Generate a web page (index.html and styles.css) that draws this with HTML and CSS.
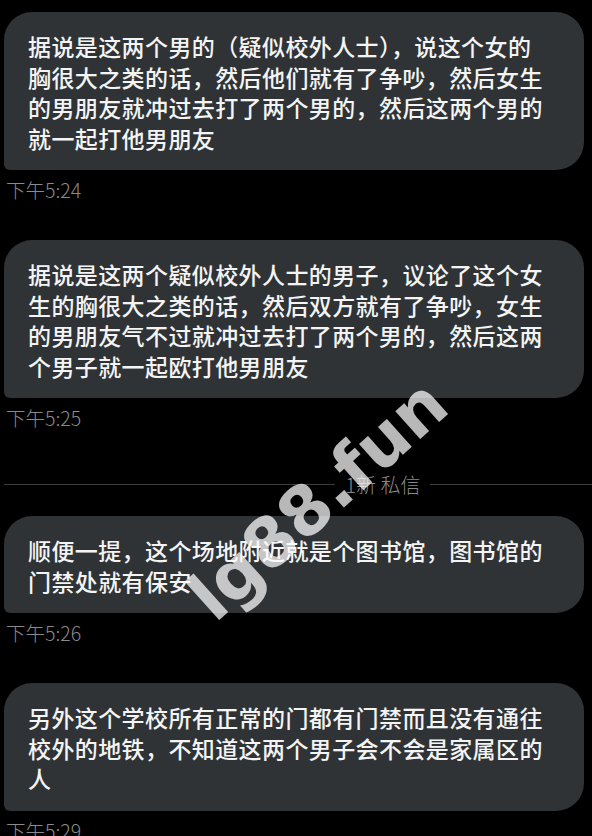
FILE: index.html
```html
<!doctype html>
<html lang="zh-CN">
<head>
  <meta charset="UTF-8" />
  <title>私信</title>
  <meta name="viewport" content="width=device-width, initial-scale=1">
  <link rel="stylesheet" href="styles.css">
</head>
<body>
  <div id="thread">
    <div class="msg">
      <div class="bubble">据说是这两个男的（疑似校外人士），说这个女的胸很大之类的话，然后他们就有了争吵，然后女生的男朋友就冲过去打了两个男的，然后这两个男的就一起打他男朋友</div>
      <div class="time">下午5:24</div>
    </div>
    <div class="msg">
      <div class="bubble">据说是这两个疑似校外人士的男子，议论了这个女生的胸很大之类的话，然后双方就有了争吵，女生的男朋友气不过就冲过去打了两个男的，然后这两个男子就一起欧打他男朋友</div>
      <div class="time">下午5:25</div>
    </div>

    <div class="divider">
      <span class="line left"></span>
      <span class="label">1新 私信</span>
      <span class="line right"></span>
    </div>

    <div class="msg">
      <div class="bubble">顺便一提，这个场地附近就是个图书馆，图书馆的门禁处就有保安</div>
      <div class="time">下午5:26</div>
    </div>
    <div class="msg">
      <div class="bubble">另外这个学校所有正常的门都有门禁而且没有通往校外的地铁，不知道这两个男子会不会是家属区的人</div>
      <div class="time">下午5:29</div>
    </div>
  </div>

  <!-- watermark sits over everything -->
  <div class="watermark">lg88.fun</div>
</body>
</html>
```

FILE: styles.css
```css
html, body {
  margin: 0;
  padding: 0;
  background: #000;
  color: #e7e9ea;
  font-family: "Noto Sans CJK SC", "Noto Sans", sans-serif;
}
body {
  position: relative;
  width: 592px;
  height: 836px;
  overflow: hidden;
}
#thread {
  padding: 12px 0 0 4px;
}
.msg {
  margin-bottom: 38px;
}
.bubble {
  margin-right: 8px;
  background: #2f3336;
  border-radius: 28px 28px 28px 6px;
  padding: 19px 36px 17px 24px;
  font-size: 23px;
  font-weight: 500;
  letter-spacing: 0.4px;
  line-height: 30.5px;
  color: #f4f4f4;
}
.time {
  padding-top: 8px;
  padding-left: 2px;
  font-size: 19.5px;
  line-height: 24px;
  font-weight: 300;
  color: #8a8a8a;
}
.divider {
  display: flex;
  align-items: center;
  margin: 42px 0 20px 0;
  height: 24px;
}
.divider .line {
  height: 1px;
  background: #3a3d40;
}
.divider .left {
  flex: 2.05 1 0;
}
.divider .right {
  flex: 1 1 0;
}
.divider .label {
  padding: 0 10px;
  font-size: 20px;
  font-weight: 300;
  color: #8a8a8a;
  white-space: pre;
}
.watermark {
  position: absolute;
  left: 318px;
  top: 500px;
  transform: translate(-50%, -50%) rotate(-42deg);
  font-family: "DejaVu Sans", Verdana, sans-serif;
  font-weight: bold;
  font-size: 68px;
  line-height: 1;
  color: rgba(255, 255, 255, 0.72);
  white-space: nowrap;
  pointer-events: none;
}
```
